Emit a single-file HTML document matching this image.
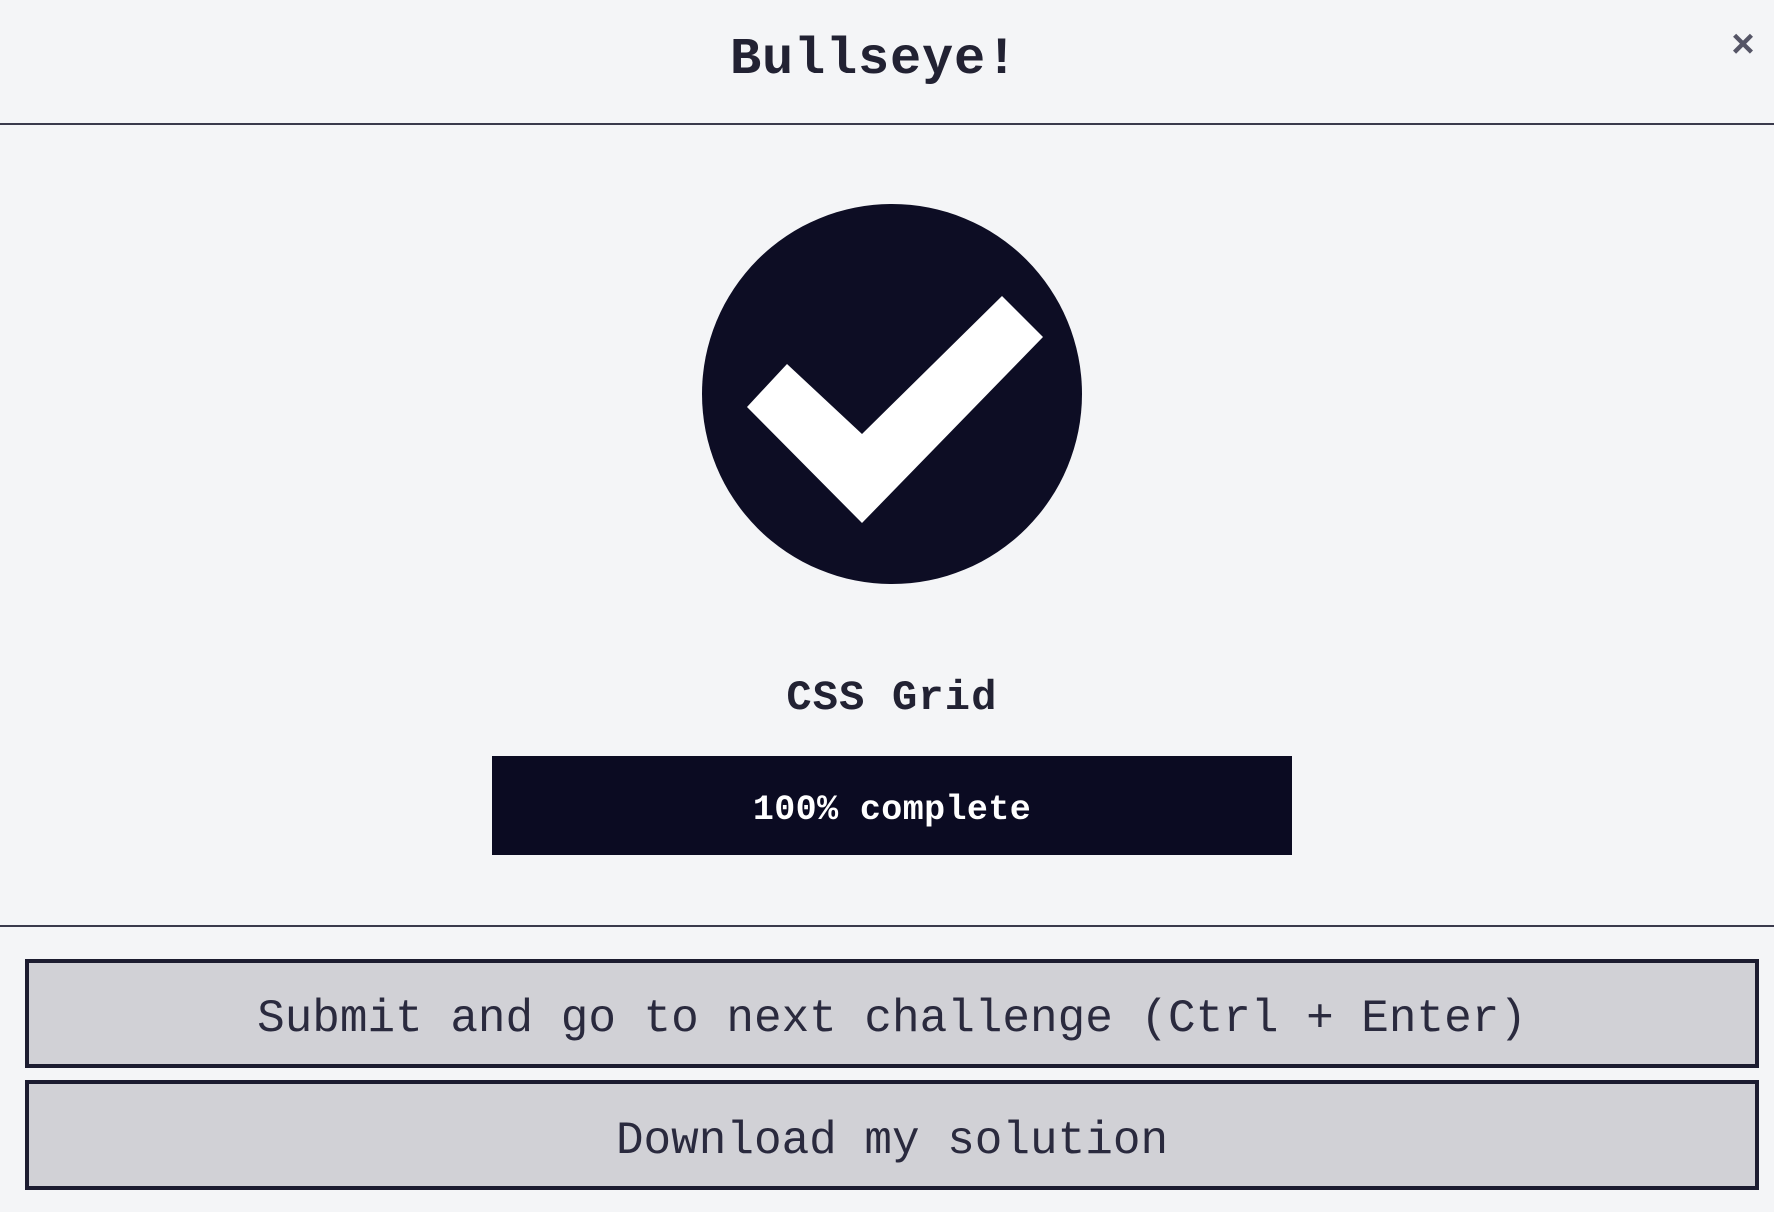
<!DOCTYPE html>
<html><head><meta charset="utf-8"><style>
html,body{margin:0;padding:0;width:1774px;height:1212px;background:#f4f5f7;overflow:hidden;font-family:"Liberation Mono",monospace;color:#1e1e30}
.t{position:absolute;left:0;width:1774px;text-align:center}
.title{top:27px;left:-13px;font-size:52px;font-weight:bold;letter-spacing:0.8px;line-height:66px;color:#222233}
.x{position:absolute;left:1731px;top:25px;font-size:40px;color:#555566;font-weight:bold}
.hr{position:absolute;left:0;width:1774px;height:2px;background:#3a3a4c}
.circ{position:absolute;left:702px;top:204px;width:380px;height:380px;border-radius:50%;background:#0d0d24}
.sub{top:672px;left:5px;font-size:42px;font-weight:bold;line-height:52px;color:#222233;letter-spacing:1.2px}
.bar{position:absolute;left:492px;top:756px;width:800px;height:99px;background:#0b0b22;color:#fff;font-size:35px;font-weight:bold;text-align:center;line-height:108px;letter-spacing:0.4px}
.btn{position:absolute;left:25px;width:1726px;background:#d1d1d6;border:4px solid #1c1c30;text-align:center;font-size:46px;color:#2a2a3e;letter-spacing:0px}
</style></head><body>
<div class="t title">Bullseye!</div>
<div class="x">×</div>
<div class="hr" style="top:123px"></div>
<div class="circ"></div>
<svg style="position:absolute;left:0;top:0" width="1774" height="1212"><polygon points="747,407 862,523 1043,337 1002,296 862,434 787,364" fill="#fff"/></svg>
<div class="t sub">CSS Grid</div>
<div class="bar">100% complete</div>
<div class="hr" style="top:925px"></div>
<div class="btn" style="top:959px;height:101px;line-height:113px">Submit and go to next challenge (Ctrl + Enter)</div>
<div class="btn" style="top:1080px;height:102px;line-height:114px">Download my solution</div>
</body></html>
